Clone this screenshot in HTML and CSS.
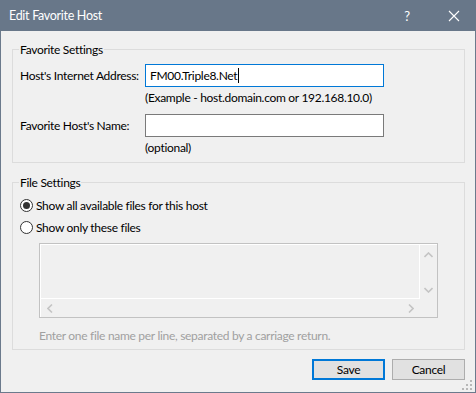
FILE: index.html
```html
<!DOCTYPE html>
<html lang="en">
<head>
  <meta charset="UTF-8">
  <title>Edit Favorite Host</title>
  <link rel="stylesheet" href="styles.css">
</head>
<body>

<div class="window">
  <div class="titlebar">
    <span class="title">Edit Favorite Host</span>
    <span class="help">?</span>
    <span class="close">
      <svg width="12" height="12" viewBox="0 0 12 12"><path d="M1 1 L11 11 M11 1 L1 11" stroke="#fff" stroke-width="1.1" fill="none"/></svg>
    </span>
  </div>

  <div class="content">
    <fieldset class="group group-host">
      <legend>Favorite Settings</legend>
      <div class="row">
        <span class="label">Host's Internet Address:</span>
        <div class="field">
          <div class="textbox focused">FM00.Triple8.Net<span class="caret"></span></div>
          <div class="hint">(Example - host.domain.com or 192.168.10.0)</div>
        </div>
      </div>
      <div class="row row-name">
        <span class="label">Favorite Host's Name:</span>
        <div class="field">
          <div class="textbox"></div>
          <div class="hint">(optional)</div>
        </div>
      </div>
    </fieldset>

    <fieldset class="group group-files">
      <legend>File Settings</legend>
      <div class="radio"><span class="dot checked"></span>Show all available files for this host</div>
      <div class="radio"><span class="dot"></span>Show only these files</div>
      <div class="filebox">
        <div class="filebox-top">
          <div class="filearea"></div>
          <div class="vscroll">
            <svg width="9" height="6" viewBox="0 0 9 6"><path d="M0.5 5 L4.5 1 L8.5 5" stroke="#c4c4c4" stroke-width="1.6" fill="none"/></svg>
            <svg width="9" height="6" viewBox="0 0 9 6"><path d="M0.5 1 L4.5 5 L8.5 1" stroke="#c4c4c4" stroke-width="1.6" fill="none"/></svg>
          </div>
        </div>
        <div class="hscroll">
          <svg width="6" height="9" viewBox="0 0 6 9"><path d="M5 0.5 L1 4.5 L5 8.5" stroke="#c4c4c4" stroke-width="1.6" fill="none"/></svg>
          <svg width="6" height="9" viewBox="0 0 6 9"><path d="M1 0.5 L5 4.5 L1 8.5" stroke="#c4c4c4" stroke-width="1.6" fill="none"/></svg>
        </div>
      </div>
      <div class="note">Enter one file name per line, separated by a carriage return.</div>
    </fieldset>

    <div class="buttons">
      <button class="btn btn-default">Save</button>
      <button class="btn">Cancel</button>
    </div>
  </div>

  <div class="grip">
    <svg width="11" height="11" viewBox="0 0 11 11" fill="#b8b8b8">
      <rect x="8" y="0" width="2" height="2"/>
      <rect x="4" y="4" width="2" height="2"/><rect x="8" y="4" width="2" height="2"/>
      <rect x="0" y="8" width="2" height="2"/><rect x="4" y="8" width="2" height="2"/><rect x="8" y="8" width="2" height="2"/>
    </svg>
  </div>
</div>

</body>
</html>
```

FILE: styles.css
```css
* {
  margin: 0;
  padding: 0;
  box-sizing: border-box;
}

body {
  font-family: 'Lato', 'Noto Sans', sans-serif;
  font-size: 12px;
  letter-spacing: -0.3px;
  color: #000;
  background: #f0f0f0;
  white-space: nowrap;
}

.window {
  position: relative;
  width: 476px;
  height: 393px;
  border: 1px solid #6b7a8c;
  border-top: none;
  background: #f0f0f0;
}

.titlebar {
  height: 31px;
  margin: 0 -1px;
  background: #687789;
  color: #fff;
  display: flex;
  align-items: center;
  padding-left: 9px;
}

.title {
  flex: 1;
  font-size: 12.5px;
}

.help {
  width: 46px;
  text-align: center;
  font-size: 13px;
}

.close {
  width: 46px;
  display: flex;
  justify-content: center;
  padding-left: 1px;
}

.content {
  padding: 11px 10px 0 11px;
}

.group {
  width: 453px;
  margin: 0;
  border: 1px solid #dcdcdc;
  padding: 0 7px 7px 7px;
  min-inline-size: 0;
}

.group legend {
  padding: 0 1px;
  margin-left: -1px;
  line-height: 15px;
}

.group-host {
  padding-top: 7px;
}

.row {
  display: grid;
  grid-template-columns: 125px 239px;
  align-items: start;
}

.row-name {
  margin-top: 9px;
}

.label {
  line-height: 23px;
}

.textbox {
  height: 23px;
  border: 1px solid #7a7a7a;
  background: #fff;
  padding: 0 4px;
  line-height: 21px;
  display: flex;
  align-items: center;
}

.textbox.focused {
  border-color: #0078d7;
}

.caret {
  display: inline-block;
  width: 1px;
  height: 15px;
  margin-left: 1px;
  background: #000;
}

.hint {
  margin-top: 3px;
  line-height: 15px;
}

.group-files {
  margin-top: 12px;
  padding-top: 7px;
  padding-bottom: 6px;
}

.radio {
  display: flex;
  align-items: center;
  gap: 3px;
  height: 16px;
  margin-bottom: 6px;
}

.dot {
  width: 13px;
  height: 13px;
  border: 1px solid #333;
  border-radius: 50%;
  background: #fff;
  display: flex;
  align-items: center;
  justify-content: center;
}

.dot.checked::after {
  content: "";
  width: 7px;
  height: 7px;
  border-radius: 50%;
  background: #333;
}

.filebox {
  margin: 8px 0 0 19px;
  width: 399px;
  height: 75px;
  border: 1px solid #c2c2c2;
  display: flex;
  flex-direction: column;
}

.filebox-top {
  flex: 1;
  display: flex;
}

.filearea {
  flex: 1;
  border: 1px solid #fff;
}

.vscroll {
  width: 17px;
  border-top: 1px solid #fff;
  display: flex;
  flex-direction: column;
  justify-content: space-between;
  align-items: center;
  padding: 7px 0 6px;
}

.hscroll {
  height: 18px;
  border-left: 1px solid #fff;
  margin-right: 17px;
  display: flex;
  justify-content: space-between;
  align-items: center;
  padding: 0 6px 0 6px;
}

.note {
  margin: 10px 0 0 19px;
  line-height: 15px;
  color: #a0a0a0;
}

.buttons {
  display: flex;
  justify-content: flex-end;
  gap: 7px;
  margin-top: 9px;
  width: 453px;
}

.btn {
  width: 73px;
  height: 21px;
  border: 1px solid #adadad;
  background: #e1e1e1;
  font-family: inherit;
  font-size: 12px;
  letter-spacing: inherit;
  color: #000;
}

.btn-default {
  border: 2px solid #0078d7;
}

.grip {
  position: absolute;
  right: 2px;
  bottom: 1px;
  line-height: 0;
}
```
